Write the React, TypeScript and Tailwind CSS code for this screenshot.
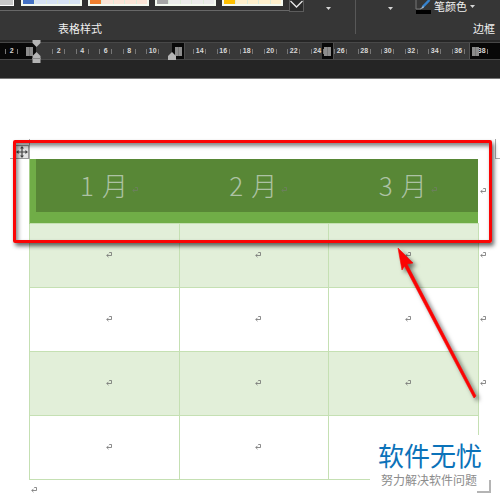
import React from "react";

const cjk = "font-['Liberation_Sans','Noto_Sans_CJK_SC',sans-serif]";

const swatches = [
  { name: "蓝色", head: "bg-[#4472c4]", pale: "bg-[#d6e2f3]" },
  { name: "橙色", head: "bg-[#f07f2e]", pale: "bg-[#fae4d6]" },
  { name: "灰色", head: "bg-[#a5a5a5]", pale: "bg-[#ebebeb]" },
  { name: "金色", head: "bg-[#ffc000]", pale: "bg-[#fff0cc]" },
];

const rulerLabels = [
  "2", "", "2", "4", "6", "8", "10", "", "14", "16", "18", "20", "22", "24", "26", "28", "30", "32", "34", "36", "38",
];

const months = ["1", "2", "3"];

function ReturnMark({ className = "text-[#707070]" }: { className?: string }) {
  return (
    <svg width="6" height="6" viewBox="0 0 6 6" fill="none" stroke="currentColor" strokeWidth="0.8" className={`inline-block shrink-0 ${className}`} aria-hidden="true">
      <path d="M3.2 0.5H5.5V3.5H0.8M2.5 1.8L0.8 3.5L2.5 5.2" />
    </svg>
  );
}

function Caret({ className = "" }: { className?: string }) {
  return (
    <svg width="5" height="3" viewBox="0 0 5 3" className={className} aria-hidden="true">
      <path d="M0 0H5L2.5 3Z" fill="#d6d6d6" />
    </svg>
  );
}

function Ribbon() {
  return (
    <header className="flex h-10 overflow-hidden bg-[#363636] text-[11px] leading-4 text-[#f0f0f0]">
      <section className="flex w-[355px] shrink-0 flex-col">
        <div className="flex h-3 items-start">
          <div className="flex h-[11px] w-[289px] gap-[6px] border-b border-[#686868] bg-[#303030]">
            <div className="mr-[1px] h-[6px] w-[14px] border-r border-b border-white bg-[#c9c9c9]" />
            {swatches.map((s) => (
              <button key={s.name} aria-label={s.name} className="flex h-[6px] w-[61px] gap-px border-x-2 border-b-2 border-[#f4faf0] bg-[#dcebd8]">
                <span className={`h-full w-[11px] ${s.head}`} />
                <span className={`h-full flex-1 ${s.pale}`} />
                <span className={`h-full flex-1 ${s.pale}`} />
                <span className={`h-full flex-1 ${s.pale}`} />
                <span className={`h-full flex-1 ${s.pale}`} />
              </button>
            ))}
          </div>
          <button aria-label="其他" className="flex h-3 w-[15px] justify-center border-x border-b border-[#5c5c5c] bg-[#2b2b2b]">
            <svg width="13" height="9" viewBox="0 0 13 9" fill="none" stroke="#e8e8e8" strokeWidth="1.3" aria-hidden="true">
              <path d="M0.5 1L6.5 7L12.5 1" />
            </svg>
          </button>
          <button aria-label="底纹" className="ml-5 flex h-3 w-2 items-end justify-center pb-[2px]">
            <Caret />
          </button>
        </div>
        <h2 className="ml-[58px] mt-[9px]">表格样式</h2>
      </section>
      <div className="h-[34px] w-px bg-[#585858]" />
      <section className="flex flex-1 flex-col">
        <div className="flex h-[14px] items-start pl-[30px]">
          <button aria-label="边框样式" className="flex h-3 w-2 items-end justify-center pb-[2px]">
            <Caret />
          </button>
          <button className="ml-[21px] flex items-start gap-[3px]">
            <svg width="16" height="14" viewBox="0 0 16 14" aria-hidden="true">
              <path d="M1 0V9H6" fill="none" stroke="#777" />
              <path d="M14.5 0L7.5 7.2" stroke="#3583cf" strokeWidth="2.4" />
              <path d="M8.5 5.8L4.8 9.3L8.6 8Z" fill="#a9bfd6" />
              <rect x="1" y="10" width="15" height="4" fill="#000" />
            </svg>
            <span className="-mt-[1px]">笔颜色</span>
            <Caret className="mt-[5px]" />
          </button>
        </div>
        <h2 className="mr-[5px] mt-[7px] text-right">边框</h2>
      </section>
    </header>
  );
}

function MarginGrip() {
  return <span className="h-[9px] w-[7px] bg-[#8c8c8c] bg-[linear-gradient(90deg,transparent_45%,#777_45%,#777_55%,transparent_55%)]" />;
}

function Ruler() {
  return (
    <div className="relative grid h-[18px] overflow-hidden border-y border-[#484848] bg-[#383838]">
      <div className="flex [grid-area:1/1]">
        <div className="w-9 bg-[#080808]" />
        <div className="w-[136px]" />
        <div className="w-3 bg-[#080808]" />
        <div className="w-[138px] border-l border-[#4c4c4c]" />
        <div className="w-[11px] bg-[#080808]" />
        <div className="w-[137px] border-x border-[#505050]" />
        <div className="flex-1 bg-[#080808]" />
      </div>
      <div className="flex items-center [grid-area:1/1]">
        {rulerLabels.map((label, i) => (
          <div key={i} className="flex w-[4.7%] shrink-0 items-center justify-center text-[7px] leading-4 font-bold text-[#d8d8d8]">
            {label && <span className="h-[5px] w-px bg-[#777]" />}
            <span className="w-[11px] text-center">{label}</span>
            {label && <span className="h-[5px] w-px bg-[#777]" />}
          </div>
        ))}
      </div>
      <div className="flex items-center [grid-area:1/1]">
        <div className="ml-[26px] flex w-[149px]"><MarginGrip /></div>
        <div className="flex w-[149px]"><MarginGrip /></div>
        <div className="flex w-[148px]"><MarginGrip /></div>
        <MarginGrip />
      </div>
    </div>
  );
}

function MonthTable() {
  const edge = "border-[#c5e0b3]";
  return (
    <table className="w-full table-fixed border-collapse">
      <colgroup>
        <col />
        <col />
        <col />
        <col className="w-[22px]" />
      </colgroup>
      <thead>
        <tr className="h-16">
          {months.map((m, i) => (
            <th key={m} scope="col" className={`bg-[#70ad47] p-0 align-top font-light ${i === 0 ? "border-l border-[#a8cf8d]" : ""}`}>
              <div className={`flex h-[53px] items-center justify-center gap-[4px] bg-[#588736] ${i === 0 ? "ml-[6px] pl-[3px]" : "pl-[9px]"}`}>
                <span className="flex gap-[8px] pb-[2px] font-['Noto_Sans_CJK_SC',sans-serif] text-[26px] leading-[50px] font-light text-[#adc2a4]">
                  <span>{m}</span>
                  <span>月</span>
                </span>
                <ReturnMark className="mt-2 text-[#6f7f63]" />
              </div>
            </th>
          ))}
          <td className="p-0 pb-[2px] pl-[2px] align-middle leading-none"><ReturnMark /></td>
        </tr>
      </thead>
      <tbody>
        {[0, 1, 2, 3].map((r) => (
          <tr key={r} className="h-16">
            {months.map((m) => (
              <td key={m} className={`border p-0 pb-[2px] pl-[9px] text-center leading-none ${edge} ${r % 2 === 0 ? "bg-[#e2efd9]" : ""}`}><ReturnMark /></td>
            ))}
            <td className="p-0 pb-[2px] pl-px leading-none"><ReturnMark /></td>
          </tr>
        ))}
      </tbody>
    </table>
  );
}

export default function App() {
  return (
    <div className={`relative min-h-screen overflow-hidden bg-white ${cjk}`}>
      <Ribbon />
      <div className="h-[2px] bg-[#262626]" />
      <div className="relative">
        <Ruler />
        <svg width="9" height="23" viewBox="0 0 9 23" className="absolute top-[-2px] left-[32px]" aria-hidden="true">
          <path d="M0.5 0H8.5V3L4.5 7L0.5 3ZM4.5 12L8.5 16V23H0.5V16Z" fill="#b4b4b4" />
          <path d="M0 18.5H9" stroke="#888" />
        </svg>
        <svg width="8" height="8" viewBox="0 0 8 8" className="absolute top-[10px] left-[168px]" aria-hidden="true">
          <path d="M4 0L8 4V8H0V4Z" fill="#b4b4b4" />
        </svg>
      </div>
      <div className="h-[18px] bg-[#252525]" />
      <main className="border-t border-[#777] pb-2">
        <div className="flex h-20 items-end justify-between">
          <div className="flex h-5 w-[30px] items-end border-r border-[#aaa]">
            <span className="h-px w-[5px] ml-[10px] bg-[#aaa]" />
            <button aria-label="移动表格" className="flex size-[14px] items-center justify-center border border-[#999] bg-[#e4e4e4]">
              <svg width="12" height="12" viewBox="0 0 12 12" fill="none" stroke="#444" strokeWidth="1.2" aria-hidden="true">
                <path d="M6 1V11M1 6H11" />
                <path d="M6 0L8 2.6H4ZM6 12L8 9.4H4ZM0 6L2.6 4V8ZM12 6L9.4 4V8Z" fill="#444" stroke="none" />
              </svg>
            </button>
          </div>
          <div className="h-5 w-[5px] border-b border-l border-[#aaa]" />
        </div>
        <div className="pl-[29px]">
          <MonthTable />
          <div className="flex h-5 items-center pl-[2px]"><ReturnMark /></div>
        </div>
      </main>
      <div className="absolute top-[140px] right-2 left-[13px] h-[103px] rounded-[2px] border-3 border-[#fb0404] shadow-[2px_3px_4px_rgba(0,0,0,0.6),inset_2px_3px_4px_rgba(0,0,0,0.5)]" />
      <svg width="100" height="165" viewBox="0 0 100 165" className="absolute top-[240px] right-[10px] drop-shadow-[3px_3px_2px_rgba(0,0,0,0.55)]" aria-hidden="true">
        <path d="M8 8L23 23L17 24L86 156L84 158L14.5 26L12 30Z" fill="#fb0404" stroke="#fb0404" strokeWidth="0.6" />
      </svg>
      <aside className="absolute top-[435px] right-0 h-[65px] w-[130px] bg-white pl-2">
        <div className="absolute right-[9px] bottom-[7px] h-[13px] w-[14px] border-r-2 border-b-2 border-[#b4b4b4]" />
        <p className="mt-[8px] text-[26px] leading-[28px] whitespace-nowrap text-[#0b72b9]">软件无忧</p>
        <p className="relative ml-[3px] mt-[2px] text-[12px] leading-4 whitespace-nowrap text-[#8c8c8c]">努力解决软件问题</p>
      </aside>
    </div>
  );
}
